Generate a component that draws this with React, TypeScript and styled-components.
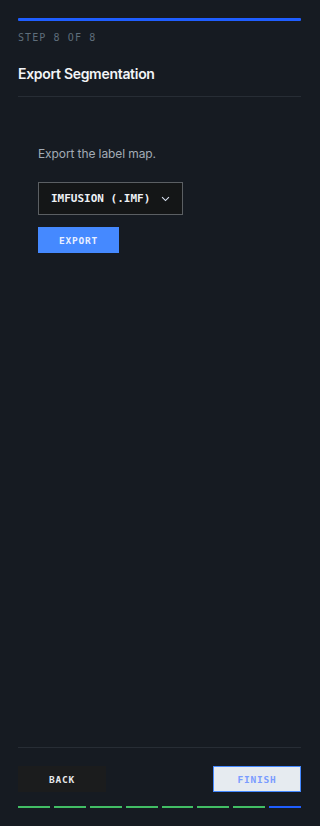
import React from "react";
import styled, {createGlobalStyle} from "styled-components";

const GlobalStyle = createGlobalStyle`
  html, body {
    margin: 0;
    padding: 0;
    background: #161b22;
  }
  * {
    box-sizing: border-box;
  }
`

const Page = styled.div`
  width: 320px;
  height: 826px;
  background: #161b22;
  display: flex;
  flex-direction: column;
  padding: 18px 19px 18px 18px;
  font-family: Inter, "Noto Sans", sans-serif;
`

const TopBar = styled.div`
  height: 3px;
  background: #1f5eff;
  border-radius: 1px;
`

const StepLabel = styled.div`
  margin-top: 10px;
  font-family: "DejaVu Sans Mono", "Liberation Mono", monospace;
  font-size: 10px;
  letter-spacing: 1.1px;
  color: #5f6e7b;
  line-height: 14px;
`

const Title = styled.h1`
  margin: 20px 0 0;
  font-size: 14px;
  font-weight: 600;
  color: #f2f4f7;
  line-height: 18px;
  letter-spacing: -0.3px;
`

const Divider = styled.div`
  height: 1px;
  background: #272d35;
  margin-top: 13px;
`

const Content = styled.div`
  flex: 1;
  display: flex;
  flex-direction: column;
  align-items: flex-start;
  padding: 49px 20px 0;
`

const Hint = styled.p`
  margin: 0;
  font-size: 12px;
  color: #a2abb5;
  line-height: 16px;
  letter-spacing: -0.1px;
`

const Select = styled.div`
  margin-top: 20px;
  height: 33px;
  width: 145px;
  display: flex;
  align-items: center;
  justify-content: space-between;
  padding: 0 11px 0 12px;
  border: 1px solid #5b5f63;
  background: #141617;
  font-family: "DejaVu Sans Mono", "Liberation Mono", monospace;
  font-size: 11px;
  font-weight: bold;
  color: #eef1f5;
  white-space: nowrap;
`

const PrimaryButton = styled.button`
  margin-top: 12px;
  height: 26px;
  width: 81px;
  border: none;
  background: #4589ff;
  color: #e8efff;
  font-family: "DejaVu Sans Mono", "Liberation Mono", monospace;
  font-size: 9.5px;
  font-weight: 600;
  letter-spacing: 0.8px;
  cursor: pointer;
`

const Footer = styled.div`
  border-top: 1px solid #272d35;
  padding-top: 18px;
`

const FooterRow = styled.div`
  display: flex;
  justify-content: space-between;
`

const NavButton = styled.button<{ $primary?: boolean }>`
  height: 26px;
  width: 88px;
  font-family: "DejaVu Sans Mono", "Liberation Mono", monospace;
  font-size: 9.5px;
  font-weight: 600;
  letter-spacing: 0.8px;
  border: ${p => p.$primary ? "1px solid #4589ff" : "none"};
  background: ${p => p.$primary ? "#e6ebf0" : "#1b1c1d"};
  color: ${p => p.$primary ? "#7a9cff" : "#e6e9ec"};
  cursor: pointer;
`

const Steps = styled.div`
  margin-top: 14px;
  display: grid;
  grid-template-columns: repeat(8, 1fr);
  gap: 4px;
`

const Segment = styled.div<{ $current?: boolean }>`
  height: 2px;
  background: ${p => p.$current ? "#1f5eff" : "#42be65"};
`

const Chevron = () => (
  <svg width="11" height="11" viewBox="0 0 16 16" fill="none">
    <path d="M3 6l5 5 5-5" stroke="#d9e2f2" strokeWidth="1.6"/>
  </svg>
)

const App: React.FC = () => {
  const total = 8
  const current = 8
  return (
    <>
      <GlobalStyle/>
      <Page>
        <TopBar/>
        <StepLabel>STEP {current} OF {total}</StepLabel>
        <Title>Export Segmentation</Title>
        <Divider/>
        <Content>
          <Hint>Export the label map.</Hint>
          <Select>
            <span>IMFUSION (.IMF)</span>
            <Chevron/>
          </Select>
          <PrimaryButton>EXPORT</PrimaryButton>
        </Content>
        <Footer>
          <FooterRow>
            <NavButton>BACK</NavButton>
            <NavButton $primary>FINISH</NavButton>
          </FooterRow>
          <Steps>
            {Array.from({length: total}).map((_, i) =>
              <Segment key={i} $current={i === current - 1}/>
            )}
          </Steps>
        </Footer>
      </Page>
    </>
  )
}

export default App
